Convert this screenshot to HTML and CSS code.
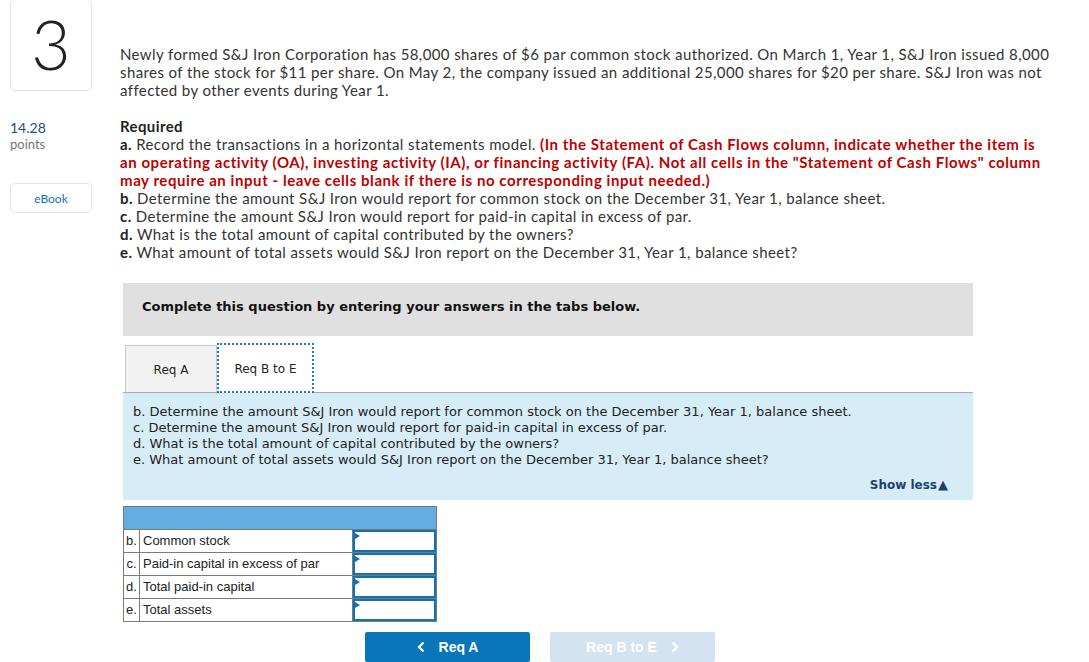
FILE: index.html
```html
<!DOCTYPE html>
<html lang="en">
<head>
    <meta charset="UTF-8">
    <title>Question 3</title>
    <link rel="stylesheet" href="styles.css">
</head>
<body>
    <div class="page">
        <div class="side">
            <div class="qnum">3</div>
            <div class="points">
                <div class="pts-value">14.28</div>
                <div class="pts-label">points</div>
            </div>
            <div class="ebook">eBook</div>
        </div>

        <div class="main">
            <p class="intro">Newly formed S&amp;J Iron Corporation has 58,000 shares of $6 par common stock authorized. On March 1, Year 1, S&amp;J Iron issued 8,000<br>shares of the stock for $11 per share. On May 2, the company issued an additional 25,000 shares for $20 per share. S&amp;J Iron was not<br>affected by other events during Year 1.</p>

            <div class="required">
                <div class="req-title">Required</div>
                <div><b>a.</b> Record the transactions in a horizontal statements model. <span class="warn">(In the Statement of Cash Flows column, indicate whether the item is<br>an operating activity (OA), investing activity (IA), or financing activity (FA). Not all cells in the "Statement of Cash Flows" column<br>may require an input - leave cells blank if there is no corresponding input needed.)</span></div>
                <div><b>b.</b> Determine the amount S&amp;J Iron would report for common stock on the December 31, Year 1, balance sheet.</div>
                <div><b>c.</b> Determine the amount S&amp;J Iron would report for paid-in capital in excess of par.</div>
                <div><b>d.</b> What is the total amount of capital contributed by the owners?</div>
                <div><b>e.</b> What amount of total assets would S&amp;J Iron report on the December 31, Year 1, balance sheet?</div>
            </div>

            <div class="question">
                <div class="banner">Complete this question by entering your answers in the tabs below.</div>

                <div class="tabs">
                    <div class="tab">Req A</div>
                    <div class="tab active">Req B to E</div>
                </div>

                <div class="panel">
                    <div>b. Determine the amount S&amp;J Iron would report for common stock on the December 31, Year 1, balance sheet.</div>
                    <div>c. Determine the amount S&amp;J Iron would report for paid-in capital in excess of par.</div>
                    <div>d. What is the total amount of capital contributed by the owners?</div>
                    <div>e. What amount of total assets would S&amp;J Iron report on the December 31, Year 1, balance sheet?</div>
                    <div class="show-less">Show less<span class="tri">&#9650;</span></div>
                </div>

                <table class="answers">
                    <thead>
                        <tr><th colspan="3"></th></tr>
                    </thead>
                    <tbody>
                        <tr><td class="letter">b.</td><td class="label">Common stock</td><td class="cell"><div class="input"></div></td></tr>
                        <tr><td class="letter">c.</td><td class="label">Paid-in capital in excess of par</td><td class="cell"><div class="input"></div></td></tr>
                        <tr><td class="letter">d.</td><td class="label">Total paid-in capital</td><td class="cell"><div class="input"></div></td></tr>
                        <tr><td class="letter">e.</td><td class="label">Total assets</td><td class="cell"><div class="input"></div></td></tr>
                    </tbody>
                </table>

                <div class="nav">
                    <button class="nav-btn prev">
                        <svg class="chev" width="8" height="12" viewBox="0 0 8 12"><path d="M6.5 1.5 L2 6 L6.5 10.5" fill="none" stroke="#fff" stroke-width="2.2"/></svg>
                        Req A
                    </button>
                    <button class="nav-btn next">
                        Req B to E
                        <svg class="chev" width="8" height="12" viewBox="0 0 8 12"><path d="M1.5 1.5 L6 6 L1.5 10.5" fill="none" stroke="#fff" stroke-width="2.2"/></svg>
                    </button>
                </div>
            </div>
        </div>
    </div>
</body>
</html>
```

FILE: styles.css
```css
body {
    margin: 0;
    font-family: 'Lato', 'Open Sans', sans-serif;
    color: #333;
    background-color: #fff;
}
.page {
    display: flex;
    padding-left: 10px;
}
.side {
    width: 82px;
    flex-shrink: 0;
}
.qnum {
    height: 92px;
    margin-top: -1px;
    border: 1px solid #e4e4e4;
    border-radius: 5px;
    box-sizing: border-box;
    display: flex;
    align-items: center;
    justify-content: center;
    font-size: 68px;
    font-weight: 300;
    color: #222;
    padding-bottom: 4px;
}
.points {
    margin-top: 28px;
    line-height: 17px;
}
.pts-value {
    font-size: 14px;
    color: #1a4f85;
}
.pts-label {
    font-size: 13px;
    color: #777;
}
.ebook {
    margin-top: 30px;
    height: 30px;
    border: 1px solid #e4e4e4;
    border-radius: 5px;
    box-sizing: border-box;
    display: flex;
    align-items: center;
    justify-content: center;
    font-size: 12px;
    color: #1a6fb0;
}
.main {
    margin-left: 28px;
    width: 940px;
    font-size: 15px;
    line-height: 18px;
}
.intro,
.required {
    letter-spacing: 0.4px;
    white-space: nowrap;
}
.intro {
    margin: 45px 0 18px;
}
.req-title {
    font-weight: bold;
    color: #222;
}
.required b {
    color: #222;
}
.warn {
    color: #c00000;
    font-weight: bold;
    letter-spacing: 0.57px;
}
.question {
    margin: 22px 0 0 3px;
    width: 850px;
    font-family: 'DejaVu Sans', Verdana, sans-serif;
}
.banner {
    background-color: #e0e0e0;
    height: 53px;
    box-sizing: border-box;
    padding: 15px 19px;
    font-size: 13px;
    font-weight: bold;
    color: #111;
}
.tabs {
    display: flex;
    align-items: flex-end;
    margin-top: 7px;
    padding-left: 2px;
    border-bottom: 1px solid #aaa;
}
.tab {
    width: 92px;
    height: 47px;
    box-sizing: border-box;
    background-color: #f2f2f2;
    border: 1px solid #c8c8c8;
    border-bottom: none;
    display: flex;
    align-items: center;
    justify-content: center;
    padding-top: 2px;
    font-size: 12px;
    color: #222;
}
.tab.active {
    width: 97px;
    height: 50px;
    margin-bottom: -1px;
    background-color: #fff;
    border: 2px dotted #1f7ab8;
}
.panel {
    background-color: #d6edf8;
    padding: 11px 10px 7px;
    font-size: 13px;
    line-height: 16px;
    color: #222;
}
.show-less {
    text-align: right;
    margin-top: 9px;
    padding-right: 15px;
    font-size: 12px;
    font-weight: bold;
    color: #1d3f6e;
}
.tri {
    font-size: 13px;
    margin-left: 1px;
}
.answers {
    margin-top: 6px;
    width: 314px;
    border-collapse: collapse;
    font-family: 'Liberation Sans', Arial, sans-serif;
    font-size: 13px;
    color: #222;
}
.answers th {
    height: 22px;
    padding: 0;
    background-color: #62aee3;
    border: 1px solid #7a7a7a;
}
.answers td {
    height: 22px;
    padding: 0;
    border: 1px solid #7a7a7a;
}
.letter {
    width: 15px;
    text-align: center;
}
.label {
    padding-left: 3px !important;
}
.cell {
    width: 83px;
}
.input {
    position: relative;
    height: 18px;
    border: 2px solid #1271b0;
    background-color: #fff;
}
.input::before {
    content: "";
    position: absolute;
    left: 0;
    top: 1px;
    border-left: 5px solid #1271b0;
    border-top: 3px solid transparent;
    border-bottom: 3px solid transparent;
}
.nav {
    display: flex;
    gap: 20px;
    margin: 10px 0 0 242px;
}
.nav-btn {
    width: 165px;
    height: 30px;
    border: none;
    border-radius: 2px;
    color: #fff;
    font-family: 'Liberation Sans', Arial, sans-serif;
    font-size: 14px;
    font-weight: bold;
    display: flex;
    align-items: center;
    justify-content: center;
    gap: 14px;
}
.prev {
    background-color: #0a76ba;
}
.next {
    background-color: #d4e3f2;
}
```
